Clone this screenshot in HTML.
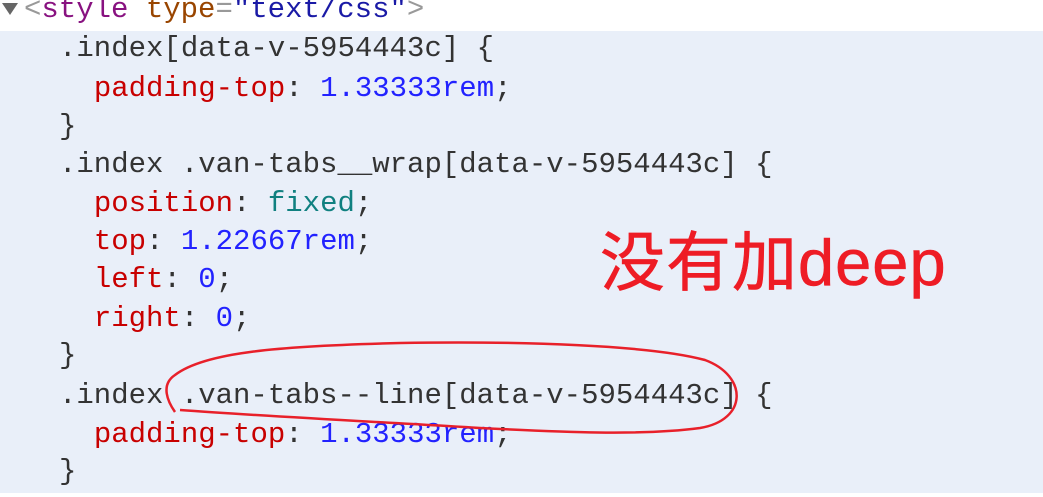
<!DOCTYPE html>
<html><head><meta charset="utf-8"><style>
body{margin:0;width:1043px;height:497px;overflow:hidden;background:#fff;position:relative;font-family:"Liberation Mono","DejaVu Sans Mono",monospace;font-size:29px;color:#333}
.bg{position:absolute;left:0;top:31px;width:1043px;height:462px;background:#e9eff9}
.l{position:absolute;white-space:pre;line-height:38px;height:38px}
.p{color:#c80000}.v{color:#2222ff}.k{color:#108080}
.tag{color:#881280}.at{color:#994500}.av{color:#1a1aa6}.g{color:#999}
.cn{position:absolute;left:600px;top:225px;font-family:"Liberation Sans","Noto Sans CJK SC",sans-serif;font-size:65px;color:#ee1c25;line-height:76px;white-space:nowrap;letter-spacing:1px;-webkit-text-stroke:0.6px #ee1c25}
.tri{position:absolute;left:2px;top:3px;width:0;height:0;border-left:8px solid transparent;border-right:8px solid transparent;border-top:12px solid #666}
</style></head><body>
<div class="bg"></div>
<div class="tri"></div>
<div class="l" style="left:24px;top:-9px"><span class="g">&lt;</span><span class="tag">style</span> <span class="at">type</span><span class="g">=</span><span class="av">"text/css"</span><span class="g">&gt;</span></div>
<div class="l" style="left:59px;top:30px">.index[data-v-5954443c] {</div>
<div class="l" style="left:59px;top:70px">  <span class="p">padding-top</span>: <span class="v">1.33333rem</span>;</div>
<div class="l" style="left:59px;top:108px">}</div>
<div class="l" style="left:59px;top:146px">.index .van-tabs__wrap[data-v-5954443c] {</div>
<div class="l" style="left:59px;top:185px">  <span class="p">position</span>: <span class="k">fixed</span>;</div>
<div class="l" style="left:59px;top:223px">  <span class="p">top</span>: <span class="v">1.22667rem</span>;</div>
<div class="l" style="left:59px;top:261px">  <span class="p">left</span>: <span class="v">0</span>;</div>
<div class="l" style="left:59px;top:300px">  <span class="p">right</span>: <span class="v">0</span>;</div>
<div class="l" style="left:59px;top:337px">}</div>
<div class="l" style="left:59px;top:377px">.index .van-tabs--line[data-v-5954443c] {</div>
<div class="l" style="left:59px;top:416px">  <span class="p">padding-top</span>: <span class="v">1.33333rem</span>;</div>
<div class="l" style="left:59px;top:453px">}</div>
<div class="cn">没有加deep</div>
<svg style="position:absolute;left:0;top:0" width="1043" height="497"><path d="M175 412 C168 402 160 385 175 375 C205 352 280 346 400 343 C520 341 650 345 705 360 C748 376 748 420 700 428 C640 436 560 432 480 428 C380 422 260 416 180 410" fill="none" stroke="#e8202a" stroke-width="2.5"/></svg>
</body></html>
